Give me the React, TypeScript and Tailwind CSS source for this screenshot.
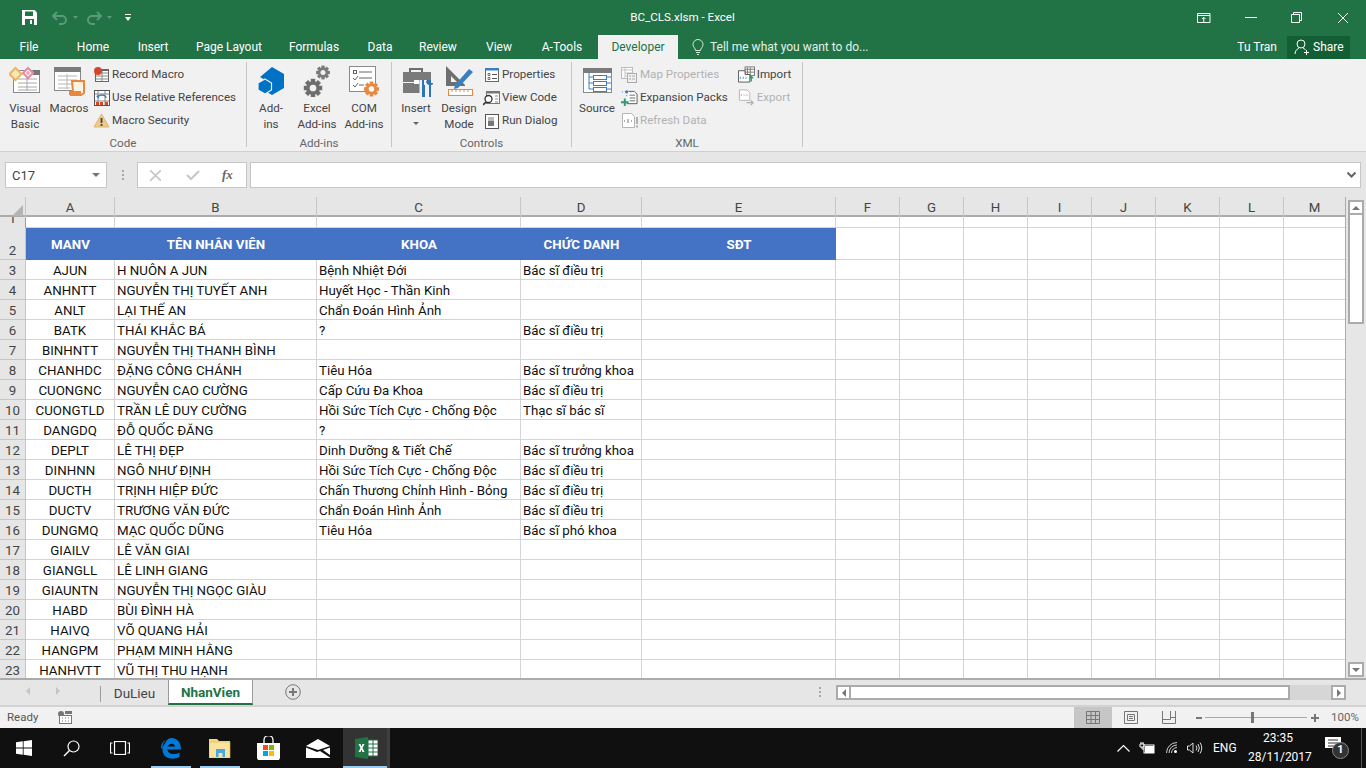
import type { ReactNode } from "react";

// sheet data, row number starts at 3
const people: [string, string, string, string][] = [
  ["AJUN", "H NUÔN A JUN", "Bệnh Nhiệt Đới", "Bác sĩ điều trị"],
  ["ANHNTT", "NGUYỄN THỊ TUYẾT ANH", "Huyết Học - Thần Kinh", ""],
  ["ANLT", "LẠI THẾ AN", "Chẩn Đoán Hình Ảnh", ""],
  ["BATK", "THÁI KHẮC BÁ", "?", "Bác sĩ điều trị"],
  ["BINHNTT", "NGUYỄN THỊ THANH BÌNH", "", ""],
  ["CHANHDC", "ĐẶNG CÔNG CHÁNH", "Tiêu Hóa", "Bác sĩ trưởng khoa"],
  ["CUONGNC", "NGUYỄN CAO CƯỜNG", "Cấp Cứu Đa Khoa", "Bác sĩ điều trị"],
  ["CUONGTLD", "TRẦN LÊ DUY CƯỜNG", "Hồi Sức Tích Cực - Chống Độc", "Thạc sĩ bác sĩ"],
  ["DANGDQ", "ĐỖ QUỐC ĐĂNG", "?", ""],
  ["DEPLT", "LÊ THỊ ĐẸP", "Dinh Dưỡng & Tiết Chế", "Bác sĩ trưởng khoa"],
  ["DINHNN", "NGÔ NHƯ ĐỊNH", "Hồi Sức Tích Cực - Chống Độc", "Bác sĩ điều trị"],
  ["DUCTH", "TRỊNH HIỆP ĐỨC", "Chấn Thương Chỉnh Hình - Bỏng", "Bác sĩ điều trị"],
  ["DUCTV", "TRƯƠNG VĂN ĐỨC", "Chẩn Đoán Hình Ảnh", "Bác sĩ điều trị"],
  ["DUNGMQ", "MẠC QUỐC DŨNG", "Tiêu Hóa", "Bác sĩ phó khoa"],
  ["GIAILV", "LÊ VĂN GIAI", "", ""],
  ["GIANGLL", "LÊ LINH GIANG", "", ""],
  ["GIAUNTN", "NGUYỄN THỊ NGỌC GIÀU", "", ""],
  ["HABD", "BÙI ĐÌNH HÀ", "", ""],
  ["HAIVQ", "VÕ QUANG HẢI", "", ""],
  ["HANGPM", "PHẠM MINH HẰNG", "", ""],
  ["HANHVTT", "VŨ THỊ THU HẠNH", "", ""],
];

const cols = "grid grid-cols-[26px_89px_202px_204px_121px_194px_64px_64px_64px_64px_64px_64px_64px_62px]";
const spare = ["E", "F", "G", "H", "I", "J", "K", "L", "M"];
const cell = "border-r border-b border-[#d4d4d4] overflow-hidden whitespace-nowrap";

function Gear({ cx, cy, r, color, hole = "#f1f1f1" }: { cx: number; cy: number; r: number; color: string; hole?: string }) {
  return (
    <g>
      {[0, 45, 90, 135].map((a) => (
        <rect key={a} x={cx - r * 0.28} y={cy - r * 1.15} width={r * 0.56} height={r * 2.3} fill={color} transform={`rotate(${a} ${cx} ${cy})`} />
      ))}
      <circle cx={cx} cy={cy} r={r * 0.85} fill={color} />
      <circle cx={cx} cy={cy} r={r * 0.42} fill={hole} />
    </g>
  );
}

function Big({ icon, lines, w, caret }: { icon: ReactNode; lines: string[]; w: string; caret?: boolean }) {
  return (
    <div className={`${w} flex flex-col items-center`}>
      <div className="h-[38px] pt-[3px] flex items-start justify-center">{icon}</div>
      {lines.map((l) => (
        <div key={l} className="h-[16px] leading-[16px] whitespace-nowrap">{l}</div>
      ))}
      {caret && <div className="mt-[6px] w-0 h-0 border-x-[3px] border-x-transparent border-t-[3px] border-t-[#666]" />}
    </div>
  );
}

function Small({ icon, label, dim }: { icon: ReactNode; label: string; dim?: boolean }) {
  return (
    <div className={`h-[23px] flex items-center gap-[2px] whitespace-nowrap ${dim ? "text-[#b1b1b1]" : ""}`}>
      <div className="w-[17px] h-[17px] flex items-center justify-center">{icon}</div>
      <span>{label}</span>
    </div>
  );
}

function Group({ w, label, children }: { w: string; label: string; children: ReactNode }) {
  return (
    <div className={`${w} h-[85px] mt-[3px] border-r border-[#c6c6c6] flex flex-col`}>
      <div className="h-[74px] shrink-0 flex">{children}</div>
      <div className="text-center leading-[14px] h-[14px] shrink-0 text-[#666]">{label}</div>
    </div>
  );
}

function VisualBasicIcon() {
  return (
    <svg width="32" height="30" viewBox="0 0 32 30">
      <rect x="4.5" y="5.500" width="26" height="22" fill="#fff" stroke="#8a8a8a" />
      <rect x="24" y="5" width="7" height="5" fill="#777" />
      <path d="M9 14h19M9 18h19M9 22h19M9 25h19M18 12v14" stroke="#a8a8a8" />
      <path d="M6.500 3l6 6-6 6-6-6z" fill="#fbe7b2" stroke="#e6b565" strokeWidth="2" />
      <path d="M19 3l5 5-5 5-5-5z" fill="#fff" stroke="#e58aa0" strokeWidth="2" />
      <path d="M19 5.500l2.500 2.500-2.500 2.500-2.500-2.500z" fill="#f1a9ba" />
    </svg>
  );
}
function MacrosIcon() {
  return (
    <svg width="32" height="31" viewBox="0 0 32 31">
      <rect x="1.500" y="2.500" width="26" height="23" fill="#fff" stroke="#8a8a8a" />
      <rect x="1" y="2" width="27" height="5" fill="#7b7b7b" />
      <path d="M5 11h19M5 15h19M5 19h14M5 23h12M14 9v15" stroke="#b5b5b5" />
      <path d="M19 16h12v12l-3 2H18v-3h2z" fill="#fdf3e3" stroke="#e8883f" strokeWidth="2" />
      <rect x="16" y="26" width="12" height="4" fill="#e8883f" />
    </svg>
  );
}
function RecordIcon() {
  return (
    <svg width="17" height="17" viewBox="0 0 17 17">
      <rect x="2.5" y="3.5" width="13" height="12" fill="#fff" stroke="#666" />
      <path d="M3 7h12M3 10h12M3 13h12M9 4v11" stroke="#888" />
      <rect x="2" y="3" width="14" height="2" fill="#666" />
      <circle cx="5" cy="5" r="4" fill="#d3472a" />
    </svg>
  );
}
function RelativeIcon() {
  return (
    <svg width="17" height="17" viewBox="0 0 17 17">
      <rect x="1.5" y="1.5" width="15" height="15" fill="#fff" stroke="#555" />
      <path d="M5 2v14M12 2v14M2 5h14M2 12h14" stroke="#888" />
      <rect x="3" y="13" width="3" height="3" fill="#d3472a" />
      <rect x="7" y="13" width="3" height="3" fill="#d3472a" />
      <rect x="12" y="13" width="3" height="3" fill="#d3472a" />
      <path d="M5 9a4 3 0 0 1 8 0" fill="none" stroke="#3a7fc1" strokeWidth="1.5" />
      <path d="M3 7l3-1v4z" fill="#3a7fc1" />
    </svg>
  );
}
function SecurityIcon() {
  return (
    <svg width="17" height="17" viewBox="0 0 17 17">
      <path d="M8.5 2L16 15H1z" fill="#edc98c" stroke="#e0b470" />
      <path d="M7.6 6h1.8v5H7.6zM7.6 12h1.8v2H7.6z" fill="#444" />
    </svg>
  );
}
function AddInsIcon() {
  return (
    <svg width="28" height="30" viewBox="0 -2 28 30">
      <path d="M15 0l12 7v14l-12 7-7-4V13L3 10z" fill="#0072c6" />
      <path d="M8 12l6.500 4v7l-6.500 4-7-4v-7z" fill="#0072c6" stroke="#f1f1f1" strokeWidth="1.2" />
    </svg>
  );
}
function ExcelAddInsIcon() {
  return (
    <svg width="28" height="32" viewBox="0 0 28 32">
      <Gear cx={20} cy={7.500} r={6} color="#7a7a7a" />
      <Gear cx={10} cy={23} r={8} color="#6e6e6e" />
    </svg>
  );
}
function ComAddInsIcon() {
  return (
    <svg width="32" height="32" viewBox="0 0 32 32">
      <rect x="1.5" y="1.5" width="26" height="25" fill="#fff" stroke="#8a8a8a" />
      <rect x="5.5" y="5.5" width="3" height="3" fill="none" stroke="#666" />
      <path d="M11 7h13M11 13h13M11 20h5M5 13l2 2 3-4M5 20l2 2 3-4" fill="none" stroke="#666" />
      <Gear cx={23.5} cy={24} r={6.500} color="#e8883f" hole="#fff" />
    </svg>
  );
}
function InsertIcon() {
  return (
    <svg width="34" height="32" viewBox="0 0 34 32">
      <path d="M11 8V4h12v4" fill="none" stroke="#6e6e6e" strokeWidth="2" />
      <rect x="4" y="7" width="28" height="10" fill="#7a7a7a" />
      <rect x="4" y="18" width="28" height="10" fill="#7a7a7a" />
      <rect x="15" y="15" width="5" height="4" fill="#fff" />
      <rect x="20.500" y="15" width="13.500" height="17" fill="#f1f1f1" />
      <path d="M23 15h2v5h1v12h-3V20h0z" fill="#2b74b8" />
      <path d="M28 15a3 3 0 0 0 2 5v12h2V20a3 3 0 0 0 2-5v3h-2v-3z" fill="#2b74b8" />
    </svg>
  );
}
function DesignIcon() {
  return (
    <svg width="30" height="32" viewBox="0 0 30 32">
      <path d="M2 1l19 19v1H2zM7 11v6h6z" fill="#6e6e6e" fillRule="evenodd" />
      <path d="M11 20L25 4l4 3-15 16-4 1z" fill="#3a7fc1" />
      <rect x="4.5" y="24.5" width="24" height="6" fill="#fff" stroke="#e8883f" />
      <path d="M8 25v2M12 25v2M16 25v2M20 25v2M24 25v2" stroke="#e8883f" />
    </svg>
  );
}
function PropertiesIcon() {
  return (
    <svg width="16" height="16" viewBox="0 0 16 16">
      <rect x="1.5" y="1.5" width="13" height="13" fill="#fff" stroke="#666" />
      <rect x="1" y="1" width="14" height="2.5" fill="#3a7fc1" />
      <path d="M4 6.5h2v2H4zM4 10.5h2v2H4z" fill="none" stroke="#555" strokeWidth="0.8" />
      <path d="M8 7.5h5M8 11.5h5" stroke="#555" />
    </svg>
  );
}
function ViewCodeIcon() {
  return (
    <svg width="17" height="16" viewBox="0 0 17 16">
      <rect x="3.5" y="1.5" width="13" height="12" fill="#fff" stroke="#777" />
      <rect x="3" y="1" width="14" height="2.5" fill="#777" />
      <path d="M12 6h3M12 9h3M12 12h3" stroke="#888" />
      <circle cx="5.5" cy="9" r="3.5" fill="#fff" stroke="#333" strokeWidth="1.3" />
      <path d="M3 12l-3 3" stroke="#333" strokeWidth="1.6" />
    </svg>
  );
}
function RunDialogIcon() {
  return (
    <svg width="16" height="16" viewBox="0 0 16 16">
      <rect x="1.5" y="1.5" width="13" height="14" fill="#fff" stroke="#555" />
      <rect x="4" y="8" width="6" height="5" fill="#777" />
      <rect x="4" y="4" width="6" height="4" fill="#bbb" />
    </svg>
  );
}
function SourceIcon() {
  return (
    <svg width="30" height="31" viewBox="0 -3 30 31">
      <rect x="1.5" y="0.5" width="28" height="24" fill="#fff" stroke="#8a8a8a" />
      <rect x="1" y="0" width="29" height="5" fill="#7b7b7b" />
      <path d="M7 3v18h4M7 9h4M7 15h4M25 9h4M25 15h4M25 21h4" fill="none" stroke="#3a7fc1" />
      <rect x="11.5" y="7.5" width="13" height="4" fill="#fff" stroke="#3a7fc1" />
      <rect x="11.5" y="13.5" width="13" height="4" fill="#fff" stroke="#3a7fc1" />
      <rect x="11.5" y="19.5" width="13" height="4" fill="#fff" stroke="#3a7fc1" />
    </svg>
  );
}
function MapPropsIcon() {
  return (
    <svg width="17" height="16" viewBox="0 0 17 16">
      <rect x="0.5" y="0.5" width="11" height="11" fill="#fff" stroke="#bbb" />
      <path d="M0 3h12M4 1v11M4 6h7M4 9h7" stroke="#c4c4c4" />
      <rect x="6.5" y="6.5" width="9" height="9" fill="#f1f1f1" stroke="#aaa" />
      <path d="M8 9h2M11 9h3M8 12h2M11 12h3" stroke="#aaa" />
    </svg>
  );
}
function ExpansionIcon() {
  return (
    <svg width="18" height="18" viewBox="0 0 18 18">
      <path d="M8 2h6l3 3v10H6" fill="#fff" stroke="#555" />
      <path d="M9 6h6M9 9h6M9 12h6" stroke="#666" />
      <circle cx="6" cy="2.5" r="1.8" fill="#3a7fc1" />
      <path d="M1 2.5h1M10 2.5h1M6 6v1" stroke="#3a7fc1" />
      <path d="M3 9.5h2v3h3v2H5v3H3v-3H0v-2h3z" fill="#2d9b6b" />
    </svg>
  );
}
function RefreshIcon() {
  return (
    <svg width="17" height="17" viewBox="0 0 17 17">
      <path d="M1.5 1.5h9l3 3v11h-12z" fill="#fff" stroke="#b5b5b5" />
      <path d="M4 8l-1 1 1 1M10 8l1 1-1 1" fill="none" stroke="#aaa" />
      <path d="M6 7h2v4H6z" fill="#bbb" />
      <path d="M15 5h2v7h-2zM15 13.5h2v2h-2z" fill="#b0b0b0" />
    </svg>
  );
}
function ImportIcon() {
  return (
    <svg width="18" height="17" viewBox="0 0 18 17">
      <rect x="7.5" y="0.5" width="10" height="9" fill="#fff" stroke="#777" />
      <path d="M7 3h11M10 1v8M13 1v8M7 6h11" stroke="#777" />
      <path d="M0.5 4.5h7v4h5v8h-12z" fill="#fff" stroke="#555" />
      <path d="M3 11l-1 1 1 1M8 11l1 1-1 1" fill="none" stroke="#3a7fc1" />
      <path d="M5 11h1v2H5z" fill="#3a7fc1" />
      <path d="M14 16v-5M12 12.5l2-2 2 2" fill="none" stroke="#2d9b6b" strokeWidth="1.5" />
    </svg>
  );
}
function ExportIcon() {
  return (
    <svg width="18" height="17" viewBox="0 0 18 17">
      <path d="M1.5 0.5h8l3 3v8h-11z" fill="#fff" stroke="#b5b5b5" />
      <path d="M4 5l-1 1 1 1M9 5l1 1-1 1" fill="none" stroke="#aaa" />
      <path d="M6 5h1v2H6z" fill="#bbb" />
      <path d="M9 14h7M13.5 11.5l2.5 2.5-2.5 2.5" fill="none" stroke="#b0b0b0" strokeWidth="1.3" />
    </svg>
  );
}

function TitleBar() {
  return (
    <div className="h-[35px] flex items-center text-white relative">
      <svg className="ml-[22px]" width="15" height="15" viewBox="0 0 15 15">
        <path d="M0 0h12.5L15 2.5V15H0z" fill="#fff" />
        <path d="M3 1.5h8v4.5H3z" fill="#217346" />
        <path d="M3 9h9v6H3z" fill="#217346" />
        <rect x="8" y="10" width="2" height="4" fill="#fff" />
      </svg>
      <svg className="ml-[15px]" width="28" height="14" viewBox="0 0 28 14" fill="none">
        <path d="M5 1L1 5l4 4M1 5h9a4 4 0 0 1 0 8H7" stroke="#5a9a7a" strokeWidth="2" />
        <path d="M21 5h5l-2.5 3z" fill="#5a9a7a" />
      </svg>
      <svg className="ml-[6px]" width="28" height="14" viewBox="0 0 28 14" fill="none">
        <path d="M11 1l4 4-4 4M15 5H6a4 4 0 0 0 0 8h3" stroke="#5a9a7a" strokeWidth="2" />
        <path d="M21 5h5l-2.5 3z" fill="#5a9a7a" />
      </svg>
      <svg className="ml-[11px]" width="6" height="7" viewBox="0 0 6 7">
        <path d="M0 0h6v1H0zM0 3h6L3 7z" fill="#fff" />
      </svg>
      <div className="flex-1 text-center text-[11.6px] pl-[37px]">BC_CLS.xlsm - Excel</div>
      <svg width="14" height="10" viewBox="0 0 14 10" fill="none" stroke="#fff">
        <path d="M.5.500h12.500v9H.5zM.5 2.500h12.500M6.750 9V4.500M5 6l1.750-1.750L8.500 6" />
      </svg>
      <div className="ml-[34px] w-[12px] h-[1px] bg-white" />
      <svg className="ml-[34px]" width="11" height="11" viewBox="0 0 11 11" fill="none" stroke="#fff">
        <path d="M.5 2.500h8v8h-8zM2.500 2.500v-2h8v8h-2" />
      </svg>
      <svg className="ml-[36px] mr-[18px]" width="10" height="10" viewBox="0 0 10 10" stroke="#fff" strokeWidth="1">
        <path d="M0 0l10 10M10 0L0 10" />
      </svg>
    </div>
  );
}

function Tabs() {
  return (
    <div className="h-[24px] flex items-center text-white text-[12px]">
      <div className="w-[58px] text-center">File</div>
      <div className="ml-[16px] w-[38px] text-center">Home</div>
      <div className="ml-[22px] w-[38px] text-center">Insert</div>
      <div className="ml-[20px] w-[74px] text-center">Page Layout</div>
      <div className="ml-[20px] w-[56px] text-center">Formulas</div>
      <div className="ml-[18px] w-[40px] text-center">Data</div>
      <div className="ml-[16px] w-[44px] text-center">Review</div>
      <div className="ml-[20px] w-[38px] text-center">View</div>
      <div className="ml-[17px] w-[54px] text-center">A-Tools</div>
      <div className="ml-[9px] w-[80px] h-[24px] bg-[#f1f1f1] text-[#217346] flex items-center justify-center">Developer</div>
      <svg className="ml-[14px]" width="12" height="16" viewBox="0 0 12 16" fill="none" stroke="#d8e8df">
        <path d="M3.500 11.500C3.500 9 1 8.500 1 5.500a5 5 0 0 1 10 0c0 3-2.500 3.500-2.500 6zM4 13.500h4M5 15.500h2" />
      </svg>
      <div className="ml-[6px] text-[#e6f0ea]">Tell me what you want to do...</div>
      <div className="ml-auto mr-[10px]">Tu Tran</div>
      <div className="w-[63px] h-[23px] mr-[16px] bg-[#125f35] flex items-center pl-[7px] gap-[3px]">
        <svg width="16" height="16" viewBox="0 0 16 16" fill="none" stroke="#fff">
          <circle cx="7" cy="5" r="4" />
          <path d="M1 15c0-3 2-5 4-6M9 9c1 .3 2 1 2.500 2M12.500 11v5M10 13.500h5" />
        </svg>
        <span>Share</span>
      </div>
    </div>
  );
}

function Ribbon() {
  return (
    <div className="h-[93px] bg-[#f1f1f1] flex text-[11.6px] text-[#444] border-b border-[#d0d0d0]">
      <Group w="w-[247px]" label="Code">
        <Big w="w-[44px] ml-[3px]" icon={<VisualBasicIcon />} lines={["Visual", "Basic"]} />
        <Big w="w-[44px]" icon={<MacrosIcon />} lines={["Macros"]} />
        <div className="ml-[2px] pt-[1px]">
          <Small icon={<RecordIcon />} label="Record Macro" />
          <Small icon={<RelativeIcon />} label="Use Relative References" />
          <Small icon={<SecurityIcon />} label="Macro Security" />
        </div>
      </Group>
      <Group w="w-[145px]" label="Add-ins">
        <Big w="w-[46px] ml-[1px]" icon={<AddInsIcon />} lines={["Add-", "ins"]} />
        <Big w="w-[46px]" icon={<ExcelAddInsIcon />} lines={["Excel", "Add-ins"]} />
        <Big w="w-[48px]" icon={<ComAddInsIcon />} lines={["COM", "Add-ins"]} />
      </Group>
      <Group w="w-[180px]" label="Controls">
        <Big w="w-[44px] ml-[2px]" icon={<InsertIcon />} lines={["Insert"]} caret />
        <Big w="w-[42px]" icon={<DesignIcon />} lines={["Design", "Mode"]} />
        <div className="ml-[3px] pt-[1px]">
          <Small icon={<PropertiesIcon />} label="Properties" />
          <Small icon={<ViewCodeIcon />} label="View Code" />
          <Small icon={<RunDialogIcon />} label="Run Dialog" />
        </div>
      </Group>
      <Group w="w-[231px]" label="XML">
        <Big w="w-[46px] ml-[2px]" icon={<SourceIcon />} lines={["Source"]} />
        <div className="ml-[1px] pt-[1px]">
          <Small dim icon={<MapPropsIcon />} label="Map Properties" />
          <Small icon={<ExpansionIcon />} label="Expansion Packs" />
          <Small dim icon={<RefreshIcon />} label="Refresh Data" />
        </div>
        <div className="ml-[10px] pt-[1px]">
          <Small icon={<ImportIcon />} label="Import" />
          <Small dim icon={<ExportIcon />} label="Export" />
        </div>
      </Group>
    </div>
  );
}

function FormulaBar() {
  return (
    <div className="h-[45px] bg-[#e6e6e6] flex items-start pt-[10px] text-[#444]">
      <div className="ml-[5px] w-[102px] h-[26px] bg-white border border-[#c6c6c6] flex items-center px-[6px] text-[13px]">
        <span className="flex-1 pt-[1px]">C17</span>
        <svg width="8" height="4" viewBox="0 0 8 4"><path d="M0 0h8L4 4z" fill="#777" /></svg>
      </div>
      <div className="ml-[15px] mt-[8px] flex flex-col gap-[2px]">
        <div className="w-[2px] h-[2px] bg-[#a8a8a8]" />
        <div className="w-[2px] h-[2px] bg-[#a8a8a8]" />
        <div className="w-[2px] h-[2px] bg-[#a8a8a8]" />
      </div>
      <div className="ml-[13px] w-[110px] h-[26px] bg-white border border-[#c6c6c6] flex items-center">
        <svg className="ml-[12px]" width="11" height="11" viewBox="0 0 11 11" stroke="#c6c6c6" strokeWidth="1.6"><path d="M0 0l11 11M11 0L0 11" /></svg>
        <svg className="ml-[25px]" width="14" height="11" viewBox="0 0 14 11" stroke="#c6c6c6" strokeWidth="2" fill="none"><path d="M1 5l4 4 8-8" /></svg>
        <span className="ml-[22px] text-[13px] italic text-[#666] [font-family:'Liberation_Serif',serif] font-bold">fx</span>
      </div>
      <div className="ml-[3px] w-[1111px] h-[26px] bg-white border border-[#c6c6c6] flex items-center justify-end pr-[4px]">
        <svg width="9" height="6" viewBox="0 0 9 6" fill="none" stroke="#666" strokeWidth="2"><path d="M.5.500l4 4 4-4" /></svg>
      </div>
    </div>
  );
}

function Grid() {
  return (
    <div className="flex-1 h-full overflow-hidden text-[13.3px] text-[#111] border-r border-[#ababab]">
      <div className={`${cols} h-[20px] bg-[#e6e6e6] text-[#444] border-b-2 border-[#ababab]`}>
        <div className="border-r border-[#c6c6c6] relative overflow-hidden">
          <div className="absolute right-[2px] bottom-[2px] w-0 h-0 border-l-[11px] border-l-transparent border-b-[11px] border-b-[#b4b4b4]" />
        </div>
        {["A", "B", "C", "D", ...spare].map((c) => (
          <div key={c} className="border-r border-[#c6c6c6] text-center leading-[21px]">{c}</div>
        ))}
      </div>
      <div className={`${cols} h-[11px]`}>
        <div className="h-[11px] bg-[#e6e6e6] border-r border-[#9b9b9b] text-center text-[#444] overflow-hidden flex justify-center items-end leading-[19px]">1</div>
        {["A", "B", "C", "D", ...spare].map((c) => (
          <div key={c} className={cell} />
        ))}
      </div>
      <div className={`${cols} h-[32px]`}>
        <div className="h-[32px] bg-[#e6e6e6] border-r border-b border-[#c6c6c6] text-[#444] flex justify-center items-end leading-[16px]">2</div>
        {["MANV", "TÊN NHÂN VIÊN", "KHOA", "CHỨC DANH", "SĐT"].map((h) => (
          <div key={h} className="h-[32px] bg-[#4472c4] text-white font-bold text-center leading-[33px]">{h}</div>
        ))}
        {spare.slice(1).map((c) => (
          <div key={c} className={cell} />
        ))}
      </div>
      {people.map((p, i) => (
        <div key={p[0]} className={`${cols} h-[20px] leading-[21px]`}>
          <div className="h-[20px] bg-[#e6e6e6] border-r border-b border-[#c6c6c6] text-center text-[#444]">{i + 3}</div>
          <div className={`${cell} h-[20px] text-center`}>{p[0]}</div>
          <div className={`${cell} h-[20px] pl-[2px]`}>{p[1]}</div>
          <div className={`${cell} h-[20px] pl-[2px]`}>{p[2]}</div>
          <div className={`${cell} h-[20px] pl-[2px]`}>{p[3]}</div>
          {spare.map((c) => (
            <div key={c} className={`${cell} h-[20px]`} />
          ))}
        </div>
      ))}
    </div>
  );
}

function VScroll() {
  return (
    <div className="w-[20px] h-full bg-[#e6e6e6] flex flex-col items-start pl-[2px] pt-[3px] pb-[1px]">
      <div className="w-[16px] h-[15px] bg-white border-2 border-[#ababab] flex items-center justify-center">
        <div className="w-0 h-0 border-x-[4px] border-x-transparent border-b-[4px] border-b-[#777]" />
      </div>
      <div className="w-[16px] h-[109px] bg-white border-x-2 border-b-2 border-[#ababab]" />
      <div className="flex-1" />
      <div className="w-[16px] h-[15px] bg-white border-2 border-[#ababab] flex items-center justify-center">
        <div className="w-0 h-0 border-x-[4px] border-x-transparent border-t-[4px] border-t-[#777]" />
      </div>
    </div>
  );
}

function SheetTabs() {
  return (
    <div className="h-[29px] bg-[#e6e6e6] border-y-2 border-b-[#d2d2d2] border-t-[#ababab] flex items-start text-[13.5px] text-[#444]">
      <div className="ml-[26px] mt-[7px] w-0 h-0 border-y-[4px] border-y-transparent border-r-[4px] border-r-[#c4c4c4]" />
      <div className="ml-[26px] mt-[7px] w-0 h-0 border-y-[4px] border-y-transparent border-l-[4px] border-l-[#c4c4c4]" />
      <div className="ml-[40px] mt-[6px] w-[1px] h-[16px] bg-[#9b9b9b]" />
      <div className="w-[67px] text-center leading-[26px]">DuLieu</div>
      <div className="w-[85px] h-[25px] bg-white border-x border-[#9b9b9b] border-b-2 border-b-[#217346] text-[#217346] font-bold text-center leading-[24px]">NhanVien</div>
      <svg className="ml-[32px] mt-[4px]" width="16" height="16" viewBox="0 0 16 16" fill="none" stroke="#777">
        <circle cx="8" cy="8" r="7.300" />
        <path d="M8 4v8M4 8h8" strokeWidth="2" />
      </svg>
      <div className="ml-[518px] mt-[7px] flex flex-col gap-[2px]">
        <div className="w-[2px] h-[2px] bg-[#a8a8a8]" />
        <div className="w-[2px] h-[2px] bg-[#a8a8a8]" />
        <div className="w-[2px] h-[2px] bg-[#a8a8a8]" />
      </div>
      <div className="ml-[15px] mt-[5px] flex h-[15px] bg-[#d6d6d6]">
        <div className="w-[15px] h-[15px] bg-white border-2 border-[#ababab] flex items-center justify-center">
          <div className="w-0 h-0 border-y-[4px] border-y-transparent border-r-[4px] border-r-[#777]" />
        </div>
        <div className="w-[439px] bg-white border-y-2 border-r-2 border-[#ababab]" />
        <div className="w-[41px]" />
        <div className="w-[15px] h-[15px] bg-white border-2 border-[#ababab] flex items-center justify-center">
          <div className="w-0 h-0 border-y-[4px] border-y-transparent border-l-[4px] border-l-[#777]" />
        </div>
      </div>
    </div>
  );
}

function StatusBar() {
  return (
    <div className="h-[21px] bg-[#f1f1f1] flex items-center text-[11.5px] text-[#555]">
      <span className="ml-[7px] w-[51px]">Ready</span>
      <svg width="14" height="13" viewBox="0 0 14 13">
        <circle cx="3" cy="3" r="3" fill="#777" />
        <rect x="1.500" y="4.500" width="12" height="8" fill="#fff" stroke="#777" />
        <rect x="7" y="0" width="7" height="3" fill="#777" />
        <path d="M4 7h1M7 7h1M10 7h1M4 10h1M7 10h1M10 10h1" stroke="#777" />
      </svg>
      <div className="ml-[1002px] w-[38px] h-[21px] bg-[#c6c6c6] flex items-center justify-center">
        <svg width="14" height="13" viewBox="0 0 14 13" fill="none" stroke="#777"><path d="M.5.500h13v12H.5zM.5 4.500h13M.5 8.500h13M5 .5v12M9.500.5v12" /></svg>
      </div>
      <div className="w-[38px] flex justify-center">
        <svg width="14" height="13" viewBox="0 0 14 13" fill="none" stroke="#777"><path d="M.5.500h13v12H.5zM3.500 3.500h7v6h-7zM5 5.500h4M5 7.500h4" /></svg>
      </div>
      <div className="w-[38px] flex justify-center">
        <svg width="14" height="13" viewBox="0 0 14 13" fill="none" stroke="#777"><path d="M.5 0v12.500h13V0M.5 8.500h8V0M8.500 6.500h5" /></svg>
      </div>
      <div className="ml-[8px] w-[6px] h-[2px] bg-[#777]" />
      <div className="ml-[1px] w-[106px] flex items-center">
        <div className="relative w-full h-[1px] bg-[#a8a8a8] ml-[2px] mr-[2px]">
          <div className="absolute left-[46px] top-[-5px] w-[3px] h-[11px] bg-[#777]" />
        </div>
      </div>
      <div className="ml-[2px] text-[#777] leading-none relative w-[8px] h-[8px]">
        <div className="absolute top-[3px] left-0 w-[8px] h-[2px] bg-[#777]" />
        <div className="absolute top-0 left-[3px] w-[2px] h-[8px] bg-[#777]" />
      </div>
      <span className="ml-[12px] text-[#666]">100%</span>
    </div>
  );
}

function Taskbar() {
  return (
    <div className="h-[40px] bg-[#101010] flex items-center text-white relative">
      <svg className="ml-[16px]" width="16" height="16" viewBox="0 0 16 16" fill="#fff">
        <path d="M0 2.300l6.800-1v6.300H0zM7.600 1.200L16 0v7.600H7.600zM0 8.400h6.800v6.300L0 13.700zM7.600 8.400H16V16l-8.400-1.200z" />
      </svg>
      <svg className="ml-[31px]" width="17" height="17" viewBox="0 0 17 17" fill="none" stroke="#fff">
        <circle cx="10.500" cy="6.500" r="5.500" strokeWidth="1.200" />
        <path d="M6.500 10.500L1 16" strokeWidth="1.500" />
      </svg>
      <svg className="ml-[30px]" width="20" height="14" viewBox="0 0 20 14" fill="none" stroke="#fff" strokeWidth="1.200">
        <rect x="4.500" y=".5" width="11" height="13" />
        <path d="M2.500 2H.5v10h2M17.500 2h2v10h-2" />
      </svg>
      <svg className="ml-[31px]" width="20" height="21" viewBox="0 0 20 21" fill="#0078d7">
        <path d="M10.500 0C16 0 20 4 20 11.500H6.500c.3 4.500 6.500 6 12 3v4.500c-7 3.500-17 1.500-17-7.500 0-3.500 2-6 5-7.500C5 5 4 6.500 3.500 8 4 3 7 0 10.500 0zM6.500 8.500h7.500C14 5 8 4.500 6.500 8.500z" />
        <path d="M0 10C0 6 2 3 5 1.500 2.500 4 1.500 6.500 1.500 11z" />
      </svg>
      <svg className="ml-[28px]" width="22" height="19" viewBox="0 0 22 19">
        <path d="M0 0h8l2 2h11v17H0z" fill="#f6d77d" />
        <rect x="0" y="3" width="21" height="16" fill="#f9e29b" stroke="#e0b84e" strokeWidth=".6" />
        <path d="M7 10h9v8h-2.500v-4h-4v4H7z" fill="#4aa5e0" />
      </svg>
      <svg className="ml-[26px]" width="23" height="24" viewBox="0 0 23 24">
        <path d="M7 7V4a4.500 4.500 0 0 1 9 0v3" fill="none" stroke="#fff" strokeWidth="1.300" />
        <path d="M0 7h23v15l-1 2H1l-1-2z" fill="#fff" />
        <rect x="6" y="9" width="5" height="5" fill="#f25022" />
        <rect x="12" y="9" width="5" height="5" fill="#7fba00" />
        <rect x="6" y="15" width="5" height="5" fill="#00a4ef" />
        <rect x="12" y="15" width="5" height="5" fill="#ffb900" />
      </svg>
      <svg className="ml-[26px]" width="24" height="19" viewBox="0 0 24 19">
        <path d="M0 7L12 0l12 7-12 4z" fill="#fff" />
        <path d="M0 8.500L11 13l3-1 10 6.500V19H0zM24 8.500V16l-7-5z" fill="#fff" />
      </svg>
      <div className="ml-[13px] w-[47px] h-[40px] bg-[#333] relative flex items-center justify-center">
        <svg width="23" height="22" viewBox="0 0 23 22">
          <rect x="9" y="3" width="14" height="16" fill="#fff" stroke="#217346" />
          <path d="M13 3v16M18 3v16M9 7h14M9 11h14M9 15h14" stroke="#217346" />
          <path d="M0 2l13-2v22L0 20z" fill="#217346" />
          <path d="M3.500 7h2l1 2.500L7.500 7h2L7.500 11l2 4h-2l-1-2.500L5.500 15h-2l2-4z" fill="#fff" />
        </svg>
        <div className="absolute left-[44px] top-0 w-[3px] h-[40px] bg-[#3f3f3f]" />
      </div>
      <svg className="ml-[727px]" width="13" height="8" viewBox="0 0 13 8" fill="none" stroke="#fff" strokeWidth="1.200"><path d="M.5 7.500l6-6 6 6" /></svg>
      <svg className="ml-[9px]" width="16" height="12" viewBox="0 0 16 12">
        <path d="M2 0v2M4 0v2M1 2h4v3H1zM3 5v2h3" stroke="#fff" fill="none" />
        <rect x="5" y="3" width="10" height="8" fill="#101010" stroke="#fff" />
        <rect x="6" y="4" width="9" height="7" fill="#fff" />
      </svg>
      <svg className="ml-[11px]" width="12" height="12" viewBox="0 0 12 12" fill="none" stroke="#ccc">
        <path d="M.5 11A10.500 10.500 0 0 1 11 .5M3 11a8 8 0 0 1 8-8M5.500 11a5.500 5.500 0 0 1 5.500-5.500" />
        <circle cx="9.500" cy="9.500" r="1.500" fill="#fff" stroke="none" />
      </svg>
      <svg className="ml-[9px]" width="16" height="12" viewBox="0 0 16 12" fill="none" stroke="#ddd">
        <path d="M.5 4v4h2l3.500 3V1L2.500 4zM9 3.500a4 4 0 0 1 0 5M11 2a7 7 0 0 1 0 8M13 .5a10 10 0 0 1 0 11" />
      </svg>
      <span className="ml-[10px] text-[12px] w-[24px]">ENG</span>
      <div className="ml-[11px] w-[60px] text-center text-[12px] leading-[19px] whitespace-nowrap">
        <div>23:35</div>
        <div>28/11/2017</div>
      </div>
      <div className="ml-[17px] relative w-[24px] h-[22px]">
        <svg width="16" height="15" viewBox="0 0 16 15">
          <path d="M0 0h16v11h-4v3l-3-3H0z" fill="#fff" />
          <path d="M3 3h10M3 6h10M3 9h6" stroke="#333" />
        </svg>
        <div className="absolute left-[7px] top-[5px] w-[17px] h-[17px] rounded-full bg-[#333] border border-[#888] text-[11px] font-bold flex items-center justify-center">1</div>
      </div>
      <div className="absolute left-[151px] bottom-0 w-[40px] h-[2px] bg-[#99ccf0]" />
      <div className="absolute left-[200px] bottom-0 w-[40px] h-[2px] bg-[#99ccf0]" />
      <div className="absolute left-[343px] bottom-0 w-[44px] h-[2px] bg-[#99ccf0]" />
      <div className="absolute left-[1361px] top-0 w-[1px] h-[40px] bg-[#555]" />
    </div>
  );
}

export default function App() {
  return (
    <div className="w-[1366px] h-[768px] overflow-hidden flex flex-col bg-[#217346] [font-family:Roboto,'Liberation_Sans',sans-serif]">
      <TitleBar />
      <Tabs />
      <Ribbon />
      <FormulaBar />
      <div className="h-[481px] flex bg-white">
        <Grid />
        <VScroll />
      </div>
      <SheetTabs />
      <StatusBar />
      <Taskbar />
    </div>
  );
}
